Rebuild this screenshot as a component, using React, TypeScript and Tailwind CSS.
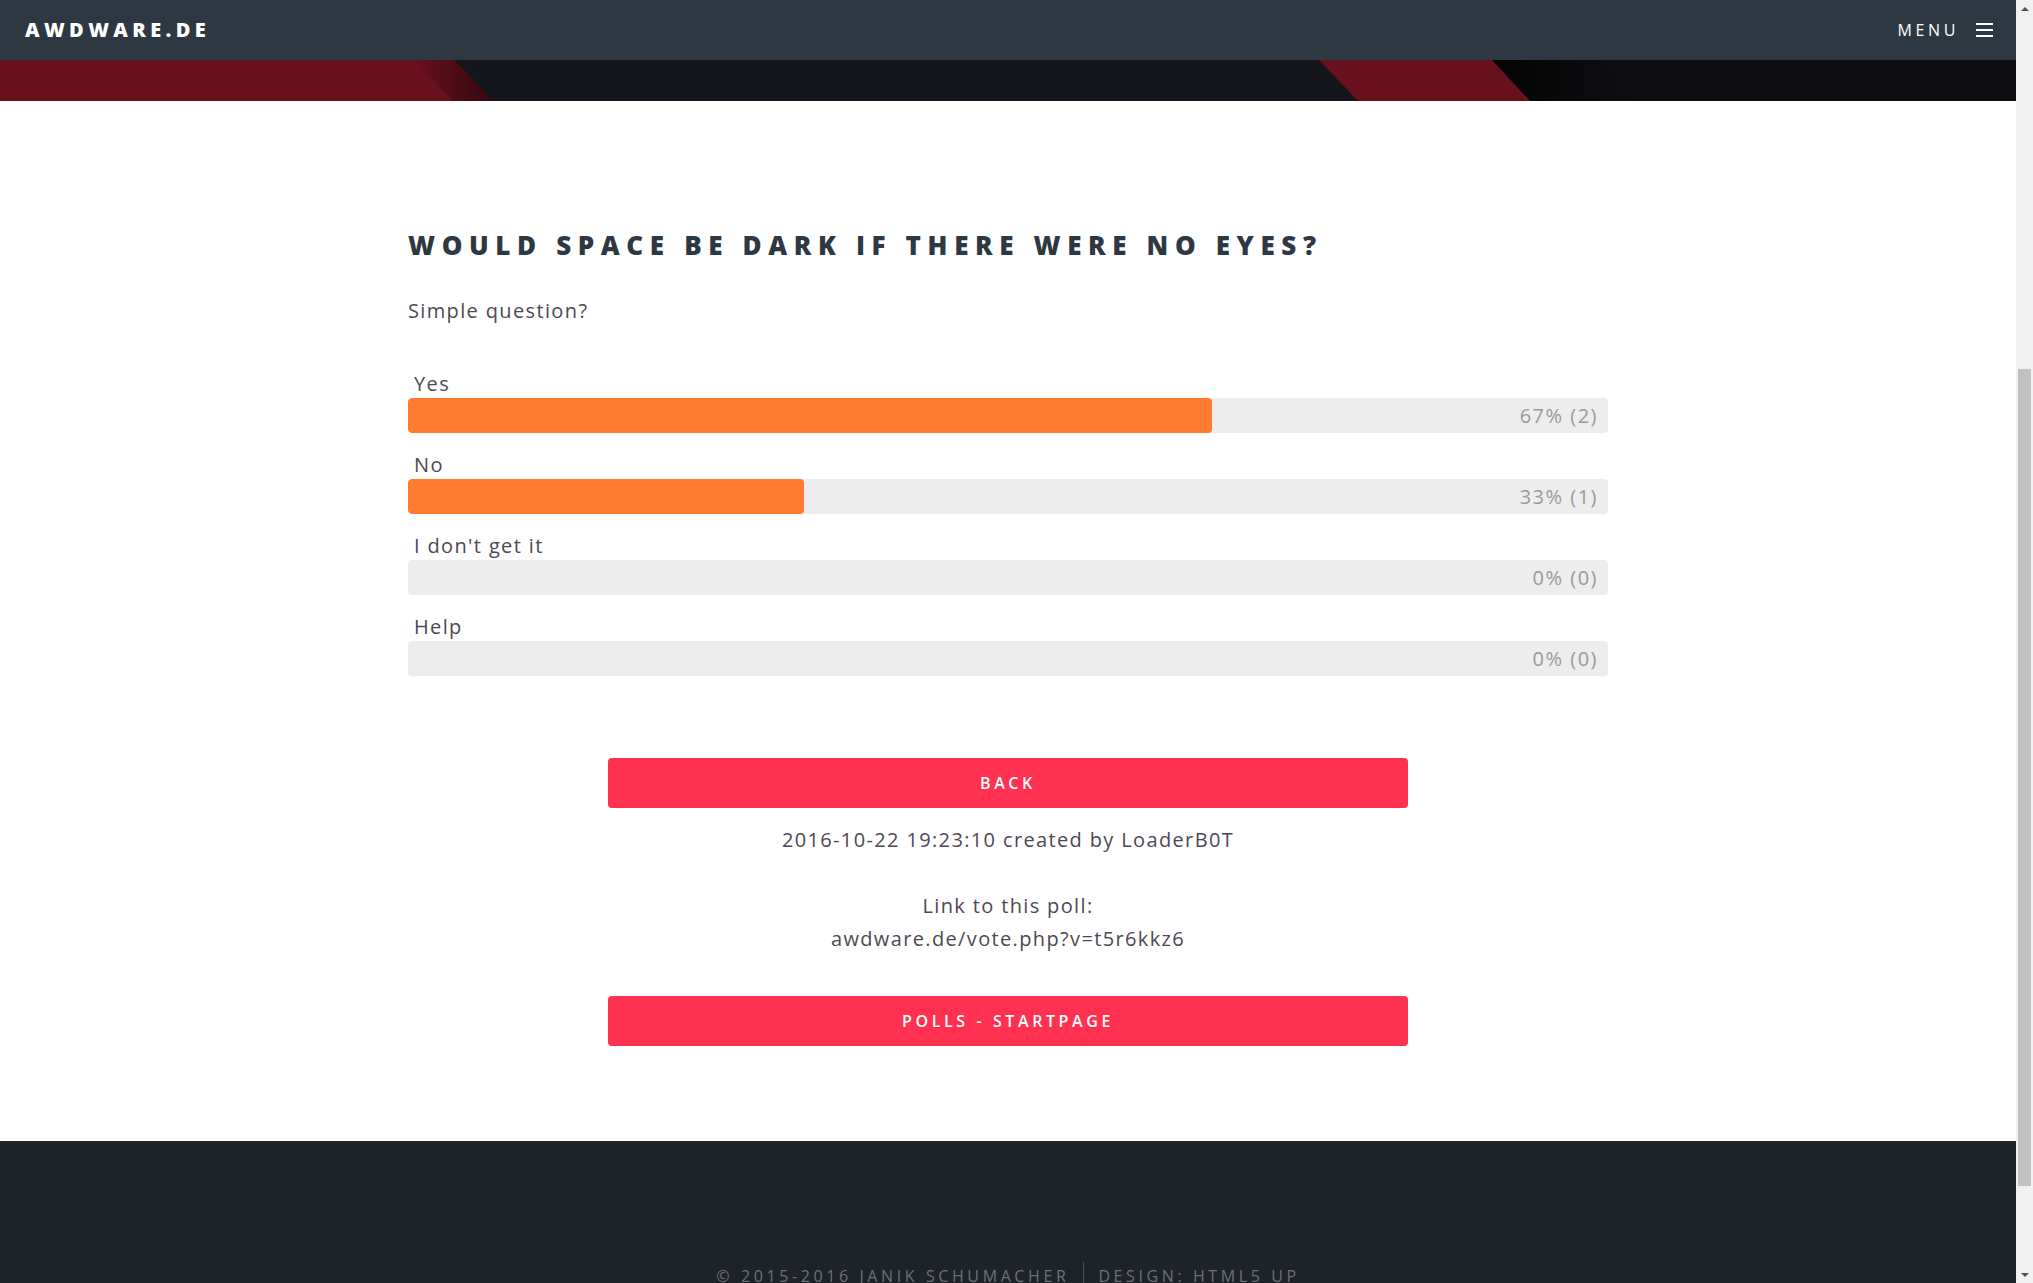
import React from "react";

const answers = [
  { label: "Yes", pct: 67, votes: 2 },
  { label: "No", pct: 33, votes: 1 },
  { label: "I don't get it", pct: 0, votes: 0 },
  { label: "Help", pct: 0, votes: 0 },
];

const Banner = () => (
  <svg className="block h-[41px] w-full shrink-0" viewBox="0 0 2016 41" preserveAspectRatio="none">
    <defs>
      <linearGradient id="shadeLeft" x1="0" x2="1" y1="0" y2="0">
        <stop offset="0" stopColor="#000" stopOpacity="0" />
        <stop offset="1" stopColor="#000" stopOpacity="0.5" />
      </linearGradient>
      <linearGradient id="shadeRight" x1="0" x2="1" y1="0" y2="0">
        <stop offset="0" stopColor="#000" stopOpacity="0.7" />
        <stop offset="1" stopColor="#000" stopOpacity="0" />
      </linearGradient>
    </defs>
    <rect x="0" y="0" width="2016" height="41" fill="#15161b" />
    <polygon points="1492,0 2016,0 2016,41 1530,41" fill="#0e0e11" />
    <polygon points="1492,0 1600,0 1638,41 1530,41" fill="url(#shadeRight)" />
    <polygon points="0,0 454,0 493,41 0,41" fill="#69101d" />
    <polygon points="414,0 454,0 493,41 453,41" fill="url(#shadeLeft)" />
    <polygon points="1319,0 1492,0 1530,41 1358,41" fill="#69101d" />
  </svg>
);

const Header = () => (
  <div className="flex h-[60px] shrink-0 items-center justify-between bg-[#2e3842] pl-[25px] pr-[23px]">
    <div className="text-[20px] font-extrabold uppercase tracking-[0.22em] text-white">awdware.de</div>
    <div className="flex items-center gap-[17px]">
      <span className="text-[16px] uppercase tracking-[0.225em] text-white">Menu</span>
      <svg width="17" height="14" viewBox="0 0 17 14">
        <path d="M0 1h17M0 7h17M0 13h17" stroke="#fff" strokeWidth="2" />
      </svg>
    </div>
  </div>
);

const Bar = ({ label, pct, votes }: { label: string; pct: number; votes: number }) => (
  <div className="mb-[18px]">
    <div className="pl-[6px] text-[20px] leading-[28px]">{label}</div>
    <div className="relative flex h-[35px] items-center justify-end overflow-hidden rounded-[4px] bg-[#ededed] pr-[10px]">
      {pct > 0 && (
        <div className="absolute left-0 top-0 h-full rounded-[4px] bg-[#ff7b2f]" style={{ width: `${pct}%` }} />
      )}
      <span className="relative text-[20px] tracking-[0.075em] text-[#9a9a9a]">
        {pct}% ({votes})
      </span>
    </div>
  </div>
);

const Scrollbar = () => (
  <div className="flex w-[17px] shrink-0 flex-col items-center bg-[#f1f1f1]">
    <div className="flex h-[17px] items-center justify-center">
      <div className="h-0 w-0 border-x-[4px] border-b-[4px] border-x-transparent border-b-[#505050]" />
    </div>
    <div className="h-[352px]" />
    <div className="h-[817px] w-[13px] bg-[#c1c1c1]" />
    <div className="flex-1" />
    <div className="flex h-[17px] items-center justify-center">
      <div className="h-0 w-0 border-x-[4px] border-t-[4px] border-x-transparent border-t-[#505050]" />
    </div>
  </div>
);

export default function App() {
  return (
    <div className="flex h-screen overflow-hidden bg-white font-['Open_Sans',sans-serif] tracking-[0.085em] text-[#4e4852]">
      <div className="flex min-w-0 flex-1 flex-col overflow-hidden">
        <Header />
        <Banner />
        <div className="shrink-0 pt-[124px] pb-[95px]">
          <div className="mx-auto w-[1200px]">
            <h2 className="text-[26px] font-extrabold uppercase leading-[40px] tracking-[0.255em] text-[#2e3842]">
              Would space be dark if there were no eyes?
            </h2>
            <p className="mt-[29px] text-[20px] leading-[33px]">Simple question?</p>
            <div className="mt-[43px]">
              {answers.map((a) => (
                <Bar key={a.label} {...a} />
              ))}
            </div>
          </div>
          <div className="mx-auto mt-[82px] flex w-[800px] flex-col items-stretch text-center text-[20px] leading-[33px]">
            <button className="h-[50px] rounded-[4px] bg-[#ff3050] text-[16px] font-semibold uppercase tracking-[0.225em] text-white">
              Back
            </button>
            <p className="mt-[15px]">2016-10-22 19:23:10 created by LoaderB0T</p>
            <p className="mt-[33px]">
              Link to this poll:
              <br />
              awdware.de/vote.php?v=t5r6kkz6
            </p>
            <button className="mt-[41px] h-[50px] rounded-[4px] bg-[#ff3050] text-[16px] font-semibold uppercase tracking-[0.225em] text-white">
              Polls - Startpage
            </button>
          </div>
        </div>
        <div className="flex-1 bg-[#1d2329] pt-[121px]">
          <div className="flex justify-center text-[16px] uppercase leading-[28px] tracking-[0.225em] text-[#6b7177]">
            <span className="pr-[14px]">© 2015-2016 Janik Schumacher</span>
            <span className="border-l border-[#4a5058] pl-[14px]">Design: HTML5 UP</span>
          </div>
        </div>
      </div>
      <Scrollbar />
    </div>
  );
}
